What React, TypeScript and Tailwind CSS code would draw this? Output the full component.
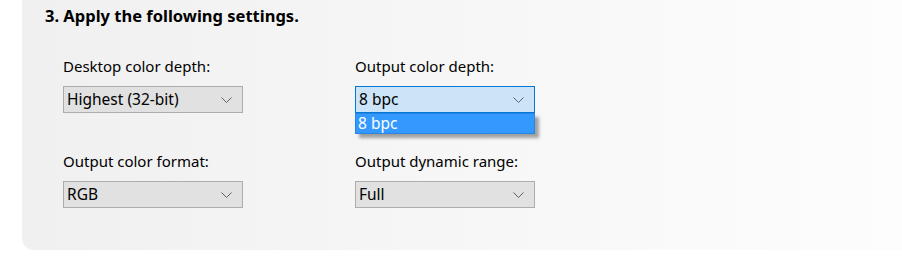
import React from "react";

const Chevron = () => (
  <svg width="11" height="6" viewBox="0 0 11 6" className="shrink-0">
    <path d="M0.5 0.5 L5.5 5.5 L10.5 0.5" fill="none" stroke="#606060" strokeWidth="1" />
  </svg>
);

function Select({ value, active, children }: { value: string; active?: boolean; children?: React.ReactNode }) {
  return (
    <div className="relative w-[180px]">
      <div
        className={
          active
            ? "flex h-[27px] items-center justify-between border border-[#0078d7] bg-[#cce4f7] pl-[3px] pr-[10px]"
            : "flex h-[27px] items-center justify-between border border-[#adadad] bg-[#e1e1e1] pl-[3px] pr-[10px]"
        }
      >
        <span className="pt-[1px] text-[15.5px] leading-none text-black">{value}</span>
        <Chevron />
      </div>
      {children}
    </div>
  );
}

function Field({ label, value, active, children }: { label: string; value: string; active?: boolean; children?: React.ReactNode }) {
  return (
    <div className="flex flex-col">
      <div className="h-[18px] text-[15px] leading-[18px] text-black">{label}</div>
      <div className="mt-[11px]">
        <Select value={value} active={active}>
          {children}
        </Select>
      </div>
    </div>
  );
}

export default function App() {
  return (
    <div className="h-[256px] w-[902px] bg-white" style={{ fontFamily: '"Noto Sans", "Open Sans", sans-serif' }}>
      <div className="ml-[22px] h-[250px] rounded-bl-[12px] bg-gradient-to-r from-[#f0f0f0] to-[#fdfdfd] pl-[23px] pt-[6px]">
        <div className="text-[16.5px] font-bold leading-[20px] text-black">3. Apply the following settings.</div>
        <div className="ml-[18px] mt-[31px] grid w-[472px] grid-cols-[292px_180px] gap-y-[39px]">
          <Field label="Desktop color depth:" value="Highest (32-bit)" />
          <Field label="Output color depth:" value="8 bpc" active>
            <div className="absolute left-0 top-[27px] z-10 h-[21px] w-[180px] border border-[#2b85e0] bg-[#3399ff] pl-[2px] text-[15.5px] leading-[19px] text-white shadow-[4px_4px_3px_rgba(0,0,0,0.35)]">
              8 bpc
            </div>
          </Field>
          <Field label="Output color format:" value="RGB" />
          <Field label="Output dynamic range:" value="Full" />
        </div>
      </div>
    </div>
  );
}
